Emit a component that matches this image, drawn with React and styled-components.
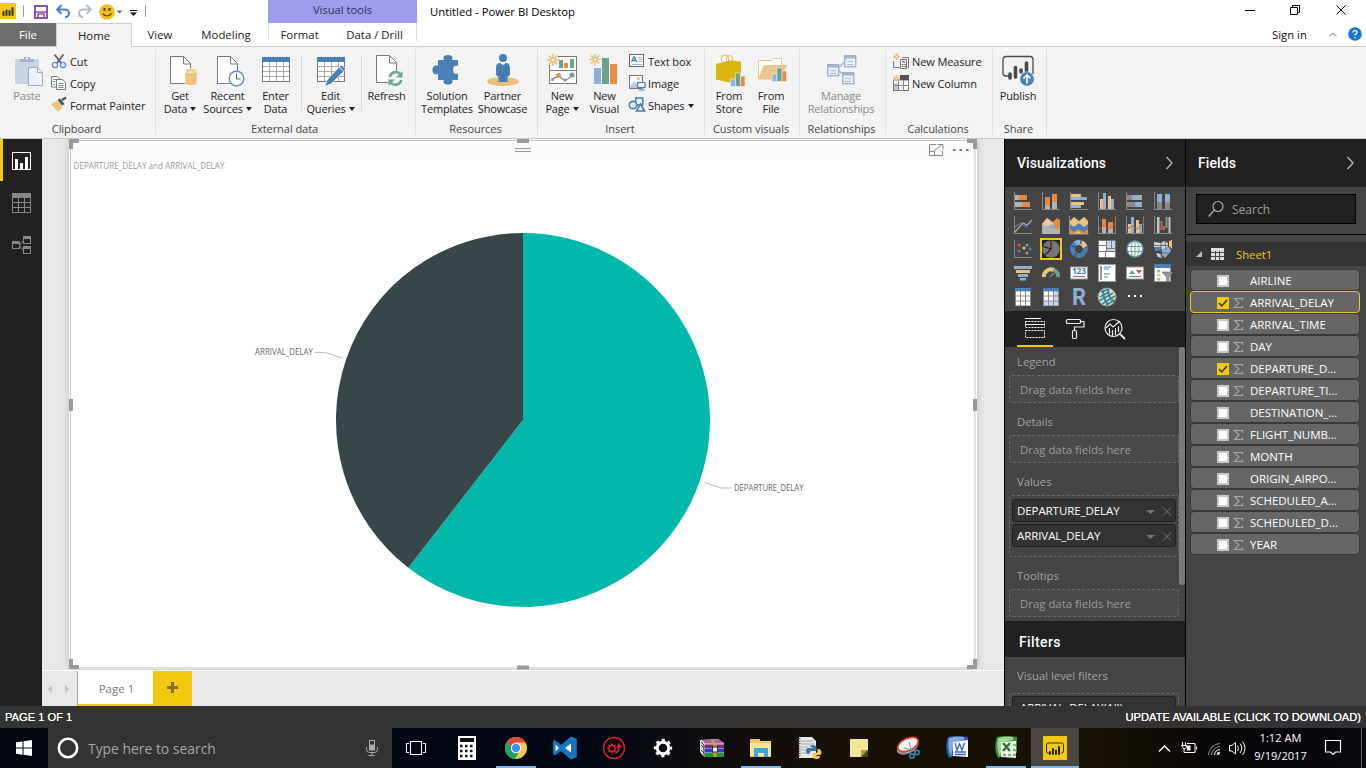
import React from "react";
import styled, { createGlobalStyle } from "styled-components";

const Global = createGlobalStyle`
  *{box-sizing:border-box}
  body{margin:0;overflow:hidden;background:#fff;font-family:"Open Sans","Noto Sans",sans-serif;font-size:11px;color:#222}
  svg{display:block;flex:none;overflow:visible}
`;

/* ---------- shell ---------- */
const Desktop = styled.div`width:1366px;height:768px;display:flex;flex-direction:column;overflow:hidden;`;
const Caret = styled.span`display:inline-block;width:0;height:0;border:3px solid transparent;border-top:4px solid ${p => p.$c || "#222"};border-bottom:0;margin-left:${p => p.$ml ?? 3}px;vertical-align:2px;`;

/* ---------- title bar ---------- */
const TitleBar = styled.header`height:23px;display:flex;background:#fff;`;
const QuickAccess = styled.div`width:268px;height:23px;`;
const VisualTools = styled.div`width:149px;background:#9d9cef;text-align:center;line-height:20px;font-size:11.2px;color:#33335a;`;
const WindowTitle = styled.div`padding-left:13px;line-height:24px;font-size:11.3px;color:#000;flex:1;`;
const WindowButtons = styled.div`width:126px;height:23px;`;

const TabRow = styled.nav`height:24px;display:flex;border-bottom:1px solid #cdcdcd;font-size:11.4px;line-height:24px;`;
const Tab = styled.div`
  width:${p => p.$w}px;height:24px;text-align:center;color:#222;padding:0 ${p => p.$pr || 0}px 0 ${p => p.$pl || 0}px;
  ${p => p.$file && "background:#6d6d6d;color:#fff;height:23px;"}
  ${p => p.$on && "background:#f3f3f3;border:1px solid #cdcdcd;border-bottom:0;line-height:23px;"}
`;
const ToolTabs = styled.div`width:149px;height:18px;display:flex;border-left:1px solid #ddd;border-right:1px solid #ddd;`;
const TabSpacer = styled.div`flex:1;`;
const SignIn = styled.div`width:94px;display:flex;font-size:11.3px;color:#111;`;

/* ---------- ribbon ---------- */
const Ribbon = styled.section`height:92px;display:flex;background:#f3f3f3;border-bottom:1px solid #c8c8c8;`;
const Group = styled.div`width:${p => p.$w}px;margin:2px 0 3px;border-right:1px solid #dfdfdf;display:flex;flex-direction:column;`;
const GroupBody = styled.div`height:71px;flex:none;display:flex;padding-left:${p => p.$pl || 0}px;`;
const GroupLabel = styled.div`flex:none;text-align:center;line-height:17px;letter-spacing:-.05px;color:#444;padding-right:2px;`;
const BigButton = styled.div`
  width:${p => p.$w}px;padding-top:4px;display:flex;flex-direction:column;align-items:center;text-align:center;
  line-height:13px;white-space:nowrap;color:${p => (p.$off ? "#888" : "#222")};letter-spacing:-.16px;
`;
const BigIcon = styled.div`height:36px;`;
const Rule = styled.div`width:1px;height:55px;margin:7px ${p => p.$r}px 0 ${p => p.$l}px;background:#dadada;`;
const SmallList = styled.div`display:flex;flex-direction:column;padding:1px 0 0 ${p => p.$l ?? 2}px;`;
const SmallButton = styled.div`height:22px;display:flex;align-items:center;gap:3px;white-space:nowrap;letter-spacing:-.1px;`;

/* ---------- workspace ---------- */
const Workspace = styled.main`height:567px;display:flex;`;
const ViewRail = styled.aside`width:42px;background:#212121;display:flex;flex-direction:column;`;
const RailItem = styled.div`height:42px;display:flex;align-items:center;padding:${p => (p.$on ? "0 0 0 9px" : "2px 0 0 12px")};${p => p.$on && "border-left:3px solid #f2c811;"}`;
const ReportArea = styled.div`width:962px;display:flex;flex-direction:column;background:#e9e9e9;`;
const CanvasWrap = styled.div`height:532px;padding:0 27px 0 27px;border-bottom:1px solid #fff;overflow:hidden;`;
const Canvas = styled.div`width:908px;height:530px;background:#fff;box-shadow:0 0 9px rgba(0,0,0,.18);`;
const PageBar = styled.div`height:35px;display:flex;`;
const PageArrows = styled.div`width:36px;border-right:1px solid #a8a8a8;`;
const PageTab = styled.div`width:75px;background:#fff;border-bottom:2px solid #f2c811;text-align:center;line-height:35px;padding-left:2px;font-size:11.5px;color:#777;`;
const AddPage = styled.div`width:39px;background:#f2c811;display:flex;align-items:center;justify-content:center;padding-bottom:1px;`;

const Pane = styled.aside`width:181px;background:#444;border-left:1px solid #000;display:flex;flex-direction:column;overflow:hidden;& > *{flex:none;}`;
const PaneHead = styled.div`height:48px;background:#212121;color:#fff;display:flex;align-items:center;justify-content:space-between;padding:0 12px 0 12px;font:500 14px Roboto,sans-serif;letter-spacing:.08px;`;
const Gallery = styled.div`height:124px;padding:2px 0 0 4px;display:grid;grid-template-columns:repeat(6,28px);grid-auto-rows:24px;`;
const GalleryCell = styled.div`
  display:flex;align-items:center;justify-content:center;
  ${p => p.$on && "border:1px solid #f2c811;outline:1px solid #f2c811;outline-offset:-2px;background:#222;width:22px;height:22px;margin:1px 3px;"}
`;
const WellTabs = styled.div`height:36px;background:#212121;display:flex;padding-left:12px;`;
const WellTab = styled.div`width:36px;margin-right:4px;display:flex;align-items:center;justify-content:center;padding-top:1px;border-bottom:2px solid ${p => (p.$on ? "#f2c811" : "transparent")};`;
const Wells = styled.div`height:274px;display:flex;overflow:hidden;`;
const WellList = styled.div`width:174px;`;
const ScrollThumb = styled.div`width:6px;height:238px;background:#7a7a7a;border-radius:3px;`;
const WellTitle = styled.div`height:${p => p.$h || 28}px;padding:${p => p.$pt ?? 1}px 0 0 12px;line-height:28px;font-size:11.3px;color:#a3a3a3;`;
const DropZone = styled.div`
  width:170px;height:28px;margin-left:4px;border:1px dashed #686868;border-radius:3px;background:#494949;
  padding-left:10px;line-height:27px;font-size:11.4px;color:#9b9b9b;
`;
const ValueZone = styled(DropZone)`height:62px;padding:3px 2px;display:flex;flex-direction:column;gap:2px;background:#444;`;
const Chip = styled.div`
  height:23px;flex:none;background:#333;border:1px solid #202020;border-radius:3px;color:#fff;font-size:11.5px;letter-spacing:-.08px;
  display:flex;align-items:center;padding:0 3px 0 4px;
`;
const ChipName = styled.span`flex:1;line-height:20px;padding-left:${p => p.$l || 0}px;`;
const FiltersHead = styled.div`height:36px;background:#212121;color:#fff;padding:3px 0 0 14px;font:500 14px/36px Roboto,sans-serif;letter-spacing:.4px;`;
const FilterZone = styled(ValueZone)`height:62px;padding-top:2px;`;

const SearchArea = styled.div`height:48px;padding:7px 9px 0 10px;border-bottom:1px solid #000;`;
const SearchBox = styled.div`width:160px;height:30px;background:#212121;border:1px solid #000;display:flex;align-items:center;gap:8px;padding-left:11px;color:#9e9e9e;font-size:12px;`;
const TableRow = styled.div`height:24px;margin:7px 0 3px;background:#333;display:flex;align-items:center;padding-left:10px;color:#f2c811;font-size:11.3px;`;
const TableName = styled.span`margin-left:12px;`;
const FieldRow = styled.div`
  width:170px;height:22px;margin-left:4px;display:flex;align-items:center;padding-left:26px;border-radius:4px;color:#fff;
  background:#666;border:1px solid ${p => (p.$hot ? "#f2c811" : "#393939")};font-size:11.5px;letter-spacing:-.03px;
`;
const CheckBox = styled.span`width:12px;height:12px;margin-top:1px;background:${p => (p.$on ? "#f2c811" : "#fff")};border:2px solid ${p => (p.$on ? "#f2c811" : "#c8c8c8")};display:flex;align-items:center;justify-content:center;`;
const Sigma = styled.span`width:21px;padding:1px 0 0 5px;`;

/* ---------- status + taskbar ---------- */
const StatusBar = styled.footer`height:22px;background:#333;color:#fff;display:flex;justify-content:space-between;padding:0 5px;font:11.15px/22px "Liberation Sans",sans-serif;text-shadow:0 0 .4px #fff;`;
const Taskbar = styled.div`height:40px;display:flex;background:linear-gradient(90deg,#020711 0,#030815 44%,#0b0c11 48%,#100d0c 54%,#171006 62%,#181305 80%,#0a0707 88%,#060509 93%,#080a10);`;
const StartButton = styled.div`width:48px;display:flex;align-items:center;justify-content:center;`;
const TaskSearch = styled.div`width:344px;background:#333;display:flex;align-items:center;padding-left:9px;color:#a6a6a6;font-size:13.9px;`;
const SearchHint = styled.span`margin-left:9px;width:278px;`;
const AppButton = styled.div`
  width:${p => (p.$w || 40)}px;margin-left:${p => (p.$ml ?? 9)}px;display:flex;align-items:center;justify-content:center;
  border-bottom:2px solid ${p => (p.$open ? "#76b9ed" : "transparent")};border-top:2px solid transparent;
  ${p => p.$active && "background:#4a4741;background-clip:padding-box;border-top-color:#4a4741;"}
`;
const Tray = styled.div`width:91px;margin-left:76px;`;
const Clock = styled.div`width:68px;color:#fff;text-align:center;font-size:11.1px;line-height:18px;padding:1px 0 0 1px;`;
const ActionCentre = styled.div`width:48px;padding-right:9px;border-right:1px solid #666;display:flex;align-items:center;justify-content:center;`;

/* Drawing surface whose viewBox is x, y, width, height at 1:1 scale. */
const Art = ({ b, children, ...r }) => {
  const [, , w, h] = b;
  return <svg width={w} height={h} viewBox={b.join(" ")} fill="none" {...r}>{children}</svg>;
};
const R = ({ x, y, w, h, f, ...r }) => <rect x={x} y={y} width={w} height={h} fill={f} {...r} />;

/* ---------- ribbon icons ---------- */
const Sheet = ({ x, y }) => (
  <>
    <path d={`M${x + 4.5} ${y + 0.5}h13l7 7v20h-20z`} fill="#fff" stroke="#777" />
    <path d={`M${x + 17.5} ${y + 0.5}v7.5h7`} stroke="#777" />
  </>
);
const Table = ({ x, y }) => (
  <>
    <R x={x + 0.5} y={y + 0.5} w={27} h={24} f="#fff" stroke="#777" />
    <R x={x} y={y} w={28} h={5} f="#4a80b8" />
    <path d={`M${x + 7.5} ${y + 5}v19M${x + 14.5} ${y + 5}v19M${x + 21.5} ${y + 5}v19M${x + 1} ${y + 9.5}h26M${x + 1} ${y + 14.5}h26M${x + 1} ${y + 19.5}h26`} stroke="#aaa" />
  </>
);
const Spark = ({ x, y, r = 5.5 }) => (
  <g stroke="#e9bd78" strokeWidth={r > 4 ? 1.5 : 1.1}>
    <path d={[0, 45, 90, 135, 180, 225, 270, 315].map(a => {
      const c = Math.cos(a * Math.PI / 180), s = Math.sin(a * Math.PI / 180);
      return `M${x + c * r * 0.45} ${y + s * r * 0.45}L${x + c * r} ${y + s * r}`;
    }).join("")} />
    <circle cx={x} cy={y} r={r * 0.35} />
  </g>
);
const Bars = ({ x, y }) => (
  <g stroke="#f3f3f3" strokeWidth=".6">
    <R x={x} y={y + 6} w={5} h={7.5} f="#8fb3d9" /><R x={x + 5} y={y} w={5} h={13.5} f="#6ba28f" /><R x={x + 10} y={y + 3} w={4.5} h={10.5} f="#e58d45" />
  </g>
);
const big = {
  paste: <><R x={15} y={59} w={24} h={25} f="#c9d3e6" /><path d="M20 62v-3h4v-2h6v2h4v3z" fill="#a3b1cf" /><R x={26} y={57.5} w={2} h={2} f="#fff" /><path d="M28.500 67.500h9l5 5v13h-14z" fill="#edf3fc" stroke="#9aabc9" /><path d="M37.500 67.500v5h5" stroke="#9aabc9" /></>,
  getData: <><Sheet x={166} y={56} /><path d="M185 70v13c0 3 12 3 12 0V70z" fill="#ecc479" stroke="#f3f3f3" strokeWidth=".6" /><ellipse cx="191" cy="70.500" rx="6" ry="2.300" fill="#f2d294" stroke="#fff" strokeWidth=".6" /></>,
  recent: <><Sheet x={213} y={56} /><circle cx="236.500" cy="78.500" r="7.300" fill="#fff" stroke="#5d8fc2" strokeWidth="1.400" /><path d="M236.500 73.500v5.500h4" stroke="#555" /></>,
  enter: <Table x={262} y={57} />,
  edit: <><Table x={317} y={57} /><path d="M325 86l2-6 14-15 5 4-15 15z" fill="#4a80b8" stroke="#f3f3f3" strokeWidth=".8" /><path d="M339 67l4.500 4" stroke="#fff" /></>,
  refresh: <><Sheet x={372} y={55} /><circle cx="395.500" cy="78.500" r="8" fill="#f3f3f3" /><path d="M389.800 77a6 6 0 0 1 10-3.200M401.200 80a6 6 0 0 1-10 3.200" stroke="#6fa692" strokeWidth="2.500" /><path d="M402.500 71v6.500h-6.500zM388.500 86v-6.500h6.500z" fill="#6fa692" /></>,
  solution: <path d="M438 60h6c-1-2-1-5 4-5s5 3 4 5h6v6c-3-1-5 0-5 3.800s2 4.700 5 3.700V80h-6c1 2 1 4.500-4 4.500s-5-2.500-4-4.500h-6v-6c-2 1-5.500.5-5.500-4s3.500-5 5.500-4z" fill="#4a80b8" />,
  partner: <><ellipse cx="503" cy="81.500" rx="16" ry="4.500" fill="#ecc07a" /><circle cx="503" cy="58" r="4" fill="#4a80b8" /><path d="M496 68q0-5 4-5l3 2 3-2q4 0 4 5v7l-2.500 2v5h-9v-5l-2.500-2z" fill="#4a80b8" /><path d="M503 72v9M500 67v8M506 67v8" stroke="#355f91" strokeWidth=".6" /></>,
  newPage: <><R x={549.5} y={56.5} w={27} h={27} f="#fff" stroke="#777" /><path d="M549 70.500h28" stroke="#777" /><R x={559} y={60} w={4} h={8} f="#6ba28f" /><R x={564} y={63} w={4} h={5} f="#e58d45" /><R x={570} y={59} w={4} h={9} f="#6ba28f" /><path d="M552 79l7-3 6 5 8-6" stroke="#555" /><circle cx="558.500" cy="75.500" r="2.500" fill="#e58d45" /><circle cx="572" cy="75" r="2.600" fill="#6ba28f" /><circle cx="565" cy="80" r="1.500" fill="#6ba28f" /><circle cx="552.500" cy="79.500" r="1.500" fill="#6ba28f" /><circle cx="553" cy="60" r="6" fill="#f3f3f3" /><Spark x={553} y={60} r={6.3} /></>,
  newVisual: <><R x={594} y={68} w={7} h={16} f="#8fafd6" /><R x={602} y={58} w={7} h={26} f="#6ba28f" /><R x={610} y={64} w={7} h={20} f="#e58d45" /><Spark x={595} y={59.5} r={5.7} /></>,
  store: <><path d="M721.500 61v-2.500a3.500 3.500 0 0 1 7 0V61M726.500 60v-1.500a3 3 0 0 1 6 0V61" stroke="#dfbd39" /><path d="M716 64l13-3.500 12 1v18l-12 3-13-3z" fill="#dcb50f" /><Bars x={730.5} y={73} /></>,
  file: <><path d="M758.500 79V60.500h13l2-2h8v20.500z" fill="#fff" stroke="#ecc58a" /><path d="M758 79l6-14h23l-6 14z" fill="#ecc58a" /><Bars x={772} y={68} /></>,
  manage: <><path d="M838 68l8-7M838 70l6 5" stroke="#b5bfd2" strokeWidth="1.800" />{[[827, 64], [844, 55], [842, 72]].map(([x, y]) => <g key={x}><R x={x + 0.7} y={y + 0.7} w={11} h={11} f="#e8f0fa" stroke="#a3b1cb" strokeWidth="1.400" /><R x={x} y={y} w={12} h={3.5} f="#a3b1cb" /><path d={`M${x + 3} ${y + 6.500}h6M${x + 3} ${y + 9.500}h6`} stroke="#b0bdd5" /></g>)}</>,
  publish: <><path d="M1009 76h-3.500q-2.500 0-2.500-3V60q0-3.500 3-3.500h24q3 0 3 3.500v14" stroke="#4a4a4a" strokeWidth="1.300" /><path d="M1010 78v-4M1015.500 77V67.500M1021 72v-2M1026.500 72v-9" stroke="#4a4a4a" strokeWidth="3.600" strokeLinecap="round" /><circle cx="1027" cy="79" r="7.200" fill="#4a80b8" stroke="#f3f3f3" strokeWidth=".6" /><path d="M1027 83.500v-8M1023.500 78.500l3.500-3.700 3.500 3.700" stroke="#fff" strokeWidth="1.600" /></>,
};
const small = {
  cut: <Art b={[51, 54, 16, 16]}><path d="M54.500 55.500l7 9M63.500 55.500l-7 9" stroke="#666" strokeWidth="2" /><circle cx="55" cy="66" r="2.600" stroke="#5d8fc2" strokeWidth="1.300" /><circle cx="63" cy="66" r="2.600" stroke="#5d8fc2" strokeWidth="1.300" /></Art>,
  copy: <Art b={[51, 76, 16, 16]}><path d="M51.500 77.500h6l2.500 2.500v8h-8.500z" fill="#fff" stroke="#777" /><path d="M56.500 80.500h6l3 3v7h-9z" fill="#fff" stroke="#777" /><path d="M53 80.500h3M53 82.500h2M53 85.500h2M58.500 84.500h5M58.500 86.500h5M58.500 88.500h5" stroke="#5d8fc2" /></Art>,
  painter: <Art b={[51, 98, 16, 16]}><path d="M51 105l6-3 6 6-5 5z" fill="#ecc479" /><path d="M57 101l3-2 5 6-3 2z" fill="#555" stroke="#f3f3f3" strokeWidth=".6" /><path d="M62 101l4-2.500" stroke="#555" strokeWidth="2.500" /></Art>,
  textBox: <Art b={[629, 54, 16, 16]}><R x={629.5} y={55.5} w={14} h={12} f="#fff" stroke="#666" /><path d="M631.500 63l2.300-5h.6l2.400 5M632.500 61.500h3.500" stroke="#4a80b8" strokeWidth="1.300" /><path d="M638.500 58.500h4M638.500 60.500h4M638.500 62.500h4M632 65.500h10" stroke="#999" strokeWidth=".8" /></Art>,
  image: <Art b={[629, 76, 16, 16]}><R x={629.5} y={76.5} w={13} h={13} f="#fff" stroke="#777" /><path d="M630 88l4-6 4 4v3h-8z" fill="#b9cce6" /><circle cx="638.500" cy="79.500" r="1.600" fill="#ecc07a" /><R x={637.5} y={83.5} w={7.5} h={5} f="#fff" stroke="#4a80b8" strokeWidth="1.200" /><path d="M638.500 91h6" stroke="#4a80b8" /></Art>,
  shapes: <Art b={[629, 98, 16, 16]}><R x={635.7} y={99} w={7} h={7} stroke="#4a80b8" strokeWidth="1.600" /><circle cx="633" cy="106" r="3.700" fill="#f3f3f3" stroke="#4a80b8" strokeWidth="1.700" /><path d="M640.500 105l4 7h-8z" fill="#f3f3f3" stroke="#4a80b8" strokeWidth="1.600" /></Art>,
  measure: <Art b={[893, 54, 16, 16]}><path d="M893.500 62v6.500h6M902 58.500h6.500v10h-1" stroke="#777" /><R x={900.500} y={60.500} w={6} h={9} f="#fff" stroke="#777" /><R x={902} y={62} w={3} h={1.500} f="#777" /><path d="M902 65.500h4M902 67.500h4" stroke="#555" strokeDasharray="1 .500" /><Spark x={896.500} y={57.500} r={3.500} /></Art>,
  column: <Art b={[893, 76, 16, 16]}><R x={893.5} y={81} w={15} h={10.500} f="#fff" stroke="#777" /><R x={900} y={76} w={9} h={5} f="#555" /><R x={894} y={84} w={4} h={7} f="#b9cce6" /><path d="M898.500 81v10M903.500 81v10M894 86.500h15" stroke="#888" /><Spark x={896.500} y={79.500} r={3.500} /></Art>,
};

const Big = ({ icon, x, w, off, lines, caret }) => (
  <BigButton $w={w} $off={off}>
    <BigIcon><Art b={[x, 53, w, 36]}>{big[icon]}</Art></BigIcon>
    {lines.map((l, i) => <div key={l}>{l}{caret && i === lines.length - 1 && <Caret />}</div>)}
  </BigButton>
);
const Small = ({ icon, label, caret }) => <SmallButton>{small[icon]}<span>{label}{caret && <Caret $ml={4} />}</span></SmallButton>;

/* ---------- gallery icons, each on a 20x20 surface centred on 10,10 ---------- */
const O = "#e58a3e", S = "#8fafd6", Y = "#ebc37e", GR = "#b3b3b3", DB = "#4a80b8", GN = "#6ba28f";
const Axis = () => <path d="M1.500 1v17.500M1 18.500h18" stroke="#888" />;
const gallery = [
  <><Axis /><R x={2} y={4} w={4} h={5} f={GR} /><R x={6} y={4} w={8} h={5} f={O} /><R x={2} y={11} w={7} h={5} f={GR} /><R x={9} y={11} w={8} h={5} f={O} /></>,
  <><Axis /><R x={4} y={6} w={5} h={9} f={O} /><R x={4} y={15} w={5} h={3} f={GR} /><R x={11} y={3} w={5} h={8} f={O} /><R x={11} y={11} w={5} h={7} f={GR} /></>,
  <><Axis /><R x={2} y={3} w={10} h={3} f={Y} /><R x={2} y={6} w={16} h={3} f={S} /><R x={2} y={11} w={13} h={3} f={Y} /><R x={2} y={14} w={10} h={3} f={S} /></>,
  <><Axis /><R x={3} y={8} w={3} h={10} f={Y} /><R x={6} y={2} w={3} h={16} f={S} /><R x={11} y={5} w={3} h={13} f={Y} /><R x={14} y={8} w={3} h={10} f={S} /></>,
  <><Axis /><R x={2} y={4} w={5} h={5} f="#888" /><R x={7} y={4} w={10} h={5} f={S} /><R x={2} y={11} w={8} h={5} f="#888" /><R x={10} y={11} w={7} h={5} f={S} /></>,
  <><Axis /><R x={4} y={3} w={5} h={8} f={S} /><R x={4} y={11} w={5} h={7} f="#888" /><R x={12} y={3} w={5} h={8} f={S} /><R x={12} y={11} w={5} h={7} f="#888" /></>,
  <><Axis /><path d="M2 17l8-9 4 2 5-5" stroke="#e3a294" strokeWidth="1.200" /><path d="M2 12l6-4 5 4 6-6" stroke={DB} strokeWidth="1.200" /></>,
  <><path d="M1 9l5-6 6 4 4-4 3 2v9H1z" fill={O} /><path d="M1 9l5-6 7 6v3H1z" fill="#ecc9a5" /><path d="M1 9l5 2 4 2 9 1v5H1z" fill={GR} /><path d="M6 11l6-2 4 5z" fill={S} /></>,
  <><path d="M1 6l4-4 5 4 5-4 4 4v8H1z" fill={Y} /><path d="M1 9l4 3 5-4 5 4 4-3v8H1z" fill={DB} /><path d="M1 14l4 3 4-3 5 3 5-3v5H1z" fill={O} /><path d="M4 19l5-3 5 3z" fill={Y} /><path d="M.500 1v18h19" stroke="#999" /></>,
  <><Axis /><R x={5} y={4} w={4} h={14} f={O} /><R x={11} y={7} w={5} h={11} f={O} /><R x={5} y={11} w={4} h={7} f={GR} /><R x={11} y={13} w={5} h={5} f={GR} /><path d="M2 14l5-3 5 3 6-5" stroke="#cf5a45" /><path d="M18.500 1v17" stroke="#a0735b" /></>,
  <><Axis /><R x={3} y={9} w={3} h={9} f={Y} /><R x={6} y={2} w={3} h={16} f={S} /><R x={11} y={5} w={3} h={13} f={Y} /><R x={14} y={9} w={3} h={9} f={S} /><path d="M2 14l5-3 5 3 6-5" stroke="#cf5a45" /><path d="M18.500 1v17" stroke="#a0735b" /></>,
  <><Axis /><R x={4} y={2} w={2.500} h={16} f="#c4c4c4" /><R x={7.500} y={6} w={2} h={9} f="#cf5a45" /><R x={9.500} y={11} w={2.500} h={4} f="#cf5a45" /><R x={12.500} y={2} w={2} h={11} f={GN} /><R x={15.500} y={2} w={2} h={16} f="#c4c4c4" /></>,
  <><Axis />{[[6, 6, "#cf5a45"], [14, 6, GN], [11, 9, Y], [17, 10, DB], [6, 12, DB], [14, 14, "#999"]].map(([x, y, f]) => <circle key={x + f} cx={x} cy={y} r="1.600" fill={f} />)}</>,
  <><circle cx="10" cy="10" r="8.800" fill="#757575" /><path d="M10 10V0M10 10L1 7M10 10l-7 7" stroke="#222" strokeWidth="1.200" /></>,
  <g strokeWidth="5"><circle cx="10" cy="10" r="6.500" stroke={DB} /><path d="M6.500 4.500a6.500 6.500 0 0 1 5-1" stroke={S} /><path d="M12 3.800a6.500 6.500 0 0 1 4.300 4.700" stroke={Y} /><path d="M12 1v4M16 8.500l3-1M3 7l3 1M6 18l1-4M15 14l2 2" stroke="#444" strokeWidth="1" /></g>,
  <><R x={1} y={1} w={18} h={18} f="#777" /><R x={2} y={2} w={7} h={4} f="#fff" /><R x={2} y={7} w={7} h={5} f="#fff" /><R x={10} y={2} w={4} h={7} f="#c5d3ea" /><R x={15} y={2} w={3} h={7} f="#c5d3ea" /><R x={10} y={10} w={8} h={2} f="#c5d3ea" /><R x={2} y={13} w={6} h={5} f="#fff" /><R x={9} y={13} w={9} h={5} f="#fff" /></>,
  <g stroke="#5d8fc2"><circle cx="10" cy="10" r="8" fill="#fff" strokeWidth="1.300" /><ellipse cx="10" cy="10" rx="4" ry="8" stroke={GN} /><path d="M10 2v16M2 7.500h16M2 12.500h16" stroke={GN} /></g>,
  <><path d="M1 3l7 1 3-2 4 2v4l-5 3-9-3z" fill="#d5d5d5" /><path d="M1 8h7v4H2z" fill={DB} /><path d="M9 10l7-2 2 4-6 7-3-3z" fill={S} /><path d="M16 2l3-1v9l-3-3z" fill={Y} /><path d="M3 14l5 1 1 4-4-1z" fill="#d5d5d5" /><path d="M1 6.500h14M8 4v14M12 3l1 8M9 14h7" stroke="#555" strokeWidth=".8" /></>,
  <><R x={1} y={3} w={18} h={3} f={S} /><R x={3} y={7} w={14} h={3} f={Y} /><R x={5} y={11} w={10} h={3} f={S} /><R x={7} y={15} w={6} h={2.5} f={S} /></>,
  <g strokeWidth="4"><path d="M3 14a7 7 0 0 1 10-7" stroke={Y} /><path d="M13 7a7 7 0 0 1 4 7" stroke={GN} /><path d="M9 14l4-4" stroke="#888" strokeWidth="1.500" /></g>,
  <><R x={1.500} y={4} w={17} h={12} f="#fff" stroke="#999" /><text x="3" y="11.200" fontSize="8.500" fontWeight="700" fill="#4a80b8" fontFamily="Open Sans" textLength="14">123</text><path d="M4 13.500h12" stroke="#777" /></>,
  <><R x={1.500} y={1.500} w={17} h={17} f="#fff" stroke="#999" /><R x={3} y={3} w={2} h={14} f="#999" /><path d="M7 4h7M7 6h5M7 11h6M7 14h4" stroke={S} strokeWidth="1.300" /></>,
  <><R x={1.500} y={4} w={17} h={12} f="#fff" stroke="#999" /><path d="M4 11l3-4 3 4z" fill={GN} /><path d="M11 7h6l-3 4z" fill="#cf5a45" /><path d="M4 13.500h12" stroke="#777" /></>,
  <><R x={1.500} y={1.500} w={16} h={17} f="#fff" stroke="#999" /><R x={1} y={1} w={17} h={4} f={DB} /><R x={4} y={7} w={3} h={2.5} f={S} /><R x={4} y={11} w={3} h={2.500} f={Y} /><R x={4} y={15} w={3} h={2.500} f="#e3a294" /><path d="M9 9h11l-4 5v5h-2.500v-5z" fill="#999" stroke="#555" strokeWidth=".5" /></>,
  <><R x={2} y={1} w={16} h={18} f="#888" /><R x={2} y={1} w={16} h={3} f={DB} />{[0, 1, 2].map(i => [0, 1, 2].map(j => <R key={i + "-" + j} x={3 + i * 5} y={4.500 + j * 5} w={4} h={4} f="#fff" />))}</>,
  <><R x={2} y={1} w={16} h={18} f="#888" /><R x={2} y={1} w={16} h={3} f={DB} />{[0, 1, 2].map(i => [0, 1, 2].map(j => <R key={i + "-" + j} x={3 + i * 5} y={4.500 + j * 5} w={4} h={4} f={i === 2 || j === 2 ? "#c5d8ef" : "#fff"} />))}</>,
  <text x="3" y="18" fontSize="23" fontWeight="700" fill="#8fafd6" fontFamily="Roboto" textLength="14" lengthAdjust="spacingAndGlyphs">R</text>,
  <><circle cx="10" cy="10" r="9" fill="#d8e0da" stroke="#999" /><path d="M4 5l8-3M3 10l9-5M2 14l14-8M5 17l13-8M9 18l9-5" stroke="#3d8f5e" strokeWidth="1.600" /><path d="M6 3q0 8 5 15M11 2q0 8 6 13" stroke="#3c7dbb" strokeWidth="2" /></>,
  <><R x={3} y={8} w={2} h={2} f="#fff" /><R x={9} y={8} w={2} h={2} f="#fff" /><R x={15} y={8} w={2} h={2} f="#fff" /></>,
];

const fields = [
  ["AIRLINE", 0, 0], ["ARRIVAL_DELAY", 1, 1], ["ARRIVAL_TIME", 1, 0], ["DAY", 1, 0], ["DEPARTURE_D...", 1, 1], ["DEPARTURE_TI...", 1, 0],
  ["DESTINATION_...", 0, 0], ["FLIGHT_NUMB...", 1, 0], ["MONTH", 1, 0], ["ORIGIN_AIRPO...", 0, 0], ["SCHEDULED_A...", 1, 0], ["SCHEDULED_D...", 1, 0], ["YEAR", 1, 0],
];

const Chevron = () => <Art b={[0, 0, 7, 12]}><path d="M.500 0l5.500 6L.500 12" stroke="#bbb" strokeWidth="1.300" /></Art>;
const ChipTools = () => <Art b={[0, 0, 28, 10]}><path d="M2 4h9l-4.500 4z" fill="#777" /><path d="M19 1.500l8 8M27 1.500l-8 8" stroke="#777" /></Art>;

const PieVisual = () => (
  <Art b={[69, 139, 908, 530]} fontFamily="Open Sans">
    <R x={71} y={143} w={904} h={17} f="#fafafa" />
    <R x={70.5} y={140.5} w={904.5} h={527.500} stroke="#c3c3c3" />
    <g fill="#999">
      <path d="M69 139h10v4h-6v6h-4zM967 139h10v10h-4v-6h-6zM69 659h4v6h6v4H69zM973 659h4v10h-10v-4h6z" />
      <R x={517} y={139} w={12} h={4} /><R x={517} y={665.500} w={12} h={4} /><R x={69} y={399} w={4} h={12} /><R x={973} y={399} w={4} h={12} />
    </g>
    <path d="M515 148.500h16M515 151.500h16" stroke="#999" />
    <path d="M936 144.500h-6.500v11h13v-5M934 151l8-6.500M937.500 144.500h5.500v5M930 151.500h4.500v4" stroke="#888" />
    <path d="M953 150h2.500M959.500 150h2.500M966 150h2.500" stroke="#777" strokeWidth="2" />
    <text x="73.500" y="169" fontSize="9" fill="#999" textLength="151" lengthAdjust="spacingAndGlyphs">DEPARTURE_DELAY and ARRIVAL_DELAY</text>
    <path d="M523 420V233A187 187 0 1 1 408.300 567.700z" fill="#01b8aa" />
    <path d="M523 420L408.300 567.700A187 187 0 0 1 523 233z" fill="#374649" />
    <path d="M315 352.500h10.500l17 5.500M704.500 482.500l17 5.500h10" stroke="#bbb" />
    <g fontSize="8.200" fill="#666">
      <text x="255" y="355" textLength="58" lengthAdjust="spacingAndGlyphs">ARRIVAL_DELAY</text>
      <text x="734" y="491" textLength="69.500" lengthAdjust="spacingAndGlyphs">DEPARTURE_DELAY</text>
    </g>
  </Art>
);

/* ---------- taskbar icons ---------- */
const apps = [
  { w: 48, ml: 0, art: <Art b={[406, 738, 20, 20]}><R x={410.500} y={741.500} w={11} h={13} stroke="#fff" /><path d="M409 743.500h-2.500v9h2.500M423 743.500h2.500v9H423" stroke="#fff" /></Art> },
  { ml: 7, art: <Art b={[457, 736, 20, 24]}><R x={458} y={736} w={18} h={24} f="#fff" /><R x={460} y={738} w={14} h={4} f="#111" /><path d="M460 746h14M460 751h14M460 756h14" stroke="#111" strokeWidth="2.500" strokeDasharray="2.500 2.500" /></Art> },
  { open: 1, art: <Art b={[504, 736, 24, 24]}><circle cx="516" cy="748" r="11" fill="#f2c94c" /><path d="M516 748L506.500 742.500A11 11 0 0 1 525.500 742.500H516z" fill="#db4a3f" /><path d="M506.500 742.500A11 11 0 0 0 515 759l5-8.500-4-2.500z" fill="#1da462" /><circle cx="516" cy="748" r="5.200" fill="#fff" /><circle cx="516" cy="748" r="4.200" fill="#4a8af4" /></Art> },
  { art: <Art b={[553, 736, 24, 24]}><path d="M571 736.500l5.500 2.500v18l-5.500 2.500-16.500-15.500-1.500-3 1.500-1 16.500 13z" fill="#2b85c7" /><path d="M553 742l2-1.500 6 4.500 10-8.500 5.500 2.500v18l-5.500 2.500-10-8.500-6 4.500-2-1.500z" fill="#1276c1" /><path d="M555.500 744.500v7l3.500-3.500zM571 743.500v9l-6-4.500z" fill="#fff" /></Art> },
  { art: <Art b={[602, 736, 24, 24]}><circle cx="614" cy="748" r="10.500" stroke="#d9222a" strokeWidth="1.400" /><circle cx="612" cy="748.500" r="3" stroke="#d9222a" strokeWidth="1.600" /><path d="M612 743.500v2M612 751.500v2M607 748.500h2M608.500 745l1.300 1.300M608.500 752l1.300-1.300M615.500 752l-1.300-1.300M615.500 745l-1.300 1.300" stroke="#d9222a" strokeWidth="1.700" /><path d="M615.500 753q3.500-1.500 3.500-6" stroke="#d9222a" strokeWidth="1.800" /><path d="M616 747.500l3-4.500 3 4.500z" fill="#d9222a" /></Art> },
  { art: <Art b={[651, 736, 24, 24]}><circle cx="663" cy="748" r="5.800" stroke="#fff" strokeWidth="3" /><circle cx="663" cy="748" r="8" stroke="#fff" strokeWidth="2.400" strokeDasharray="3.200 3.083" strokeDashoffset="1.600" /></Art> },
  { art: <Art b={[700, 736, 24, 24]}><path d="M700 740l18-1 6 4v14H704l-4-5z" fill="#ddd" /><path d="M702 740l17-.500 5 4h-19z" fill="#b45bae" /><path d="M705 744.500h19v4h-19z" fill="#7b2b78" /><path d="M705 749h19v3.500h-19z" fill="#2840d8" /><path d="M705 753h19v4h-19z" fill="#1e9733" /><path d="M701 742l3 3v12M701 745l3 3M701 750l3 3" stroke="#333" /><path d="M712 740l3 5v12" stroke="#d2a136" strokeWidth="3" /><R x={712.5} y={747} w={5} h={5} f="#eee" stroke="#333" /></Art> },
  { open: 1, art: <Art b={[749, 736, 24, 24]}><path d="M750 739h10v2h11v16h-21z" fill="#f0c75c" /><path d="M750 743h21v13h-21z" fill="#fbe29a" /><path d="M754 757v-9h14v9h-4v-4h-6v4z" fill="#3ea6e0" /></Art> },
  { art: <Art b={[798, 736, 24, 24]}><path d="M799 737h13l4 4v17h-17z" fill="#e6e6e6" /><path d="M801 741h13M801 744h13M801 747h7M801 750h6M801 753h6" stroke="#aaa" /><path d="M799.500 738v19" stroke="#555" strokeDasharray="1 1.500" strokeWidth="2" /><path d="M810 747q0-2 3-2t3.500 2v4h-5q-2 0-2 3h-2q-1.500-1-1.500-3.500t2-2.500h4v-1z" fill="#3b77a8" /><path d="M817.500 749h2q2 1 2 3.500t-2 2.500h-3v1h3.500q0 3-3.500 3t-3.500-2.500V753h3q1.500-.500 1.500-2z" fill="#f5ca3f" /></Art> },
  { art: <Art b={[847, 736, 24, 24]}><path d="M850 739h18v11l-7 7h-11z" fill="#f3e596" /><path d="M861 757v-7h7z" fill="#b09d3f" /><path d="M868 750v7h-7z" fill="#51481a" /></Art> },
  { art: <Art b={[896, 736, 24, 24]}><ellipse cx="907.500" cy="747" rx="11.500" ry="6.500" transform="rotate(-25 907.500 747)" fill="#999" /><ellipse cx="908" cy="744.500" rx="11" ry="6" transform="rotate(-25 908 744.500)" fill="#f7f7f7" stroke="#d43f3a" strokeWidth="1.600" /><path d="M909 742l3 10M904 748l12 3" stroke="#888" /><circle cx="912" cy="756" r="2.300" stroke="#2b8ac9" strokeWidth="1.500" /><circle cx="917" cy="752.500" r="2.300" stroke="#2b8ac9" strokeWidth="1.500" /></Art> },
  { art: <Art b={[945, 736, 24, 24]}><path d="M948 737q8-2 20 0v16l-10 1-9 4q-5-9-1-21z" fill="#2d5ca8" /><path d="M949 738q7-2 15-1v3l-10 2-3 15q-4-9-2-19z" fill="#83a9dd" /><path d="M953 742l15-2v17l-15-1z" fill="#f7f9fc" /><path d="M955 743l2 7 2.500-6 2.500 6 2.500-7M955 752h11M955 754.500h11" stroke="#3a66b0" strokeWidth="1.300" /></Art> },
  { open: 1, art: <Art b={[994, 736, 24, 24]}><path d="M997 737q8-2 20 0v16l-10 1-9 4q-5-9-1-21z" fill="#3d9440" /><path d="M998 738q7-2 15-1v3l-10 2-3 15q-4-9-2-19z" fill="#a3d48e" /><path d="M1001 742l15-1v17l-15-1z" fill="#f4faf0" /><path d="M1003 743l7 8M1010 743l-7 8" stroke="#2a7b31" strokeWidth="2.500" /><path d="M1003 755h3M1008 755h3M1013 755h3M1013 750h3M1013 745h3" stroke="#7bb870" strokeWidth="2.500" /></Art> },
  { open: 1, active: 1, w: 48, ml: 5, art: <Art b={[1043, 736, 24, 24]}><R x={1043} y={736} w={24} h={24} f="#f2c811" /><path d="M1049 753h-1q-1.500 0-1.500-2v-6q0-2 2-2h13q2 0 2 2v6q0 2-1.500 2h-1" stroke="#3d3209" /><path d="M1050 754v-2M1053 754v-5M1056 754v-3.500M1059 754v-7" stroke="#2b2408" strokeWidth="2" strokeLinecap="round" /></Art> },
];

export default function App() {
  return (
    <Desktop>
      <Global />
      <TitleBar>
        <QuickAccess>
          <Art b={[0, 0, 268, 23]}>
            <R x={0} y={3} w={16} h={16} f="#f2c811" /><path d="M3.500 15v-3M6.500 15v-4.500M9.500 15v-4M12.500 15V8" stroke="#333" strokeWidth="2" strokeLinecap="round" />
            <path d="M23.500 5v12M145.500 5v12" stroke="#999" />
            <path d="M35 6h12v12H35z" stroke="#8a56b0" strokeWidth="2" /><path d="M35 12h12M38 18v-4h6v4" stroke="#8a56b0" strokeWidth="1.600" />
            <path d="M57.500 9.500h6.500q5 0 5 3.700 0 3-4 4.300M61.500 5l-4.300 4.500 4.300 4.300" stroke="#4a80b8" strokeWidth="2" />
            <path d="M90.500 9.500H84q-5 0-5 3.700 0 3 4 4.300M86.500 5l4.300 4.500-4.300 4.300" stroke="#b0bdd0" strokeWidth="2" />
            <circle cx="107" cy="12" r="7.800" fill="#f5bd17" /><R x={103.500} y={8} w={2} h={3} f="#5c4300" /><R x={108.500} y={8} w={2} h={3} f="#5c4300" /><path d="M102.500 13.500q4.500 5 9 0" stroke="#5c4300" strokeWidth="1.200" />
            <path d="M116.500 10.500h6l-3 3z" fill="#666" /><path d="M130 10.500h7" stroke="#111" /><path d="M130 12.500h7l-3.500 3.500z" fill="#111" />
          </Art>
        </QuickAccess>
        <VisualTools>Visual tools</VisualTools>
        <WindowTitle>Untitled - Power BI Desktop</WindowTitle>
        <WindowButtons>
          <Art b={[1240, 0, 126, 23]} stroke="#000"><path d="M1245 10.500h10M1336.500 5.500l9 9M1345.500 5.500l-9 9" /><path d="M1290.500 7.500h7v7h-7zM1292.500 7.500v-2h7v7h-2" /></Art>
        </WindowButtons>
      </TitleBar>
      <TabRow>
        <Tab $w={56} $file>File</Tab>
        <Tab $w={76} $on>Home</Tab>
        <Tab $w={56}>View</Tab>
        <Tab $w={80} $pr={4}>Modeling</Tab>
        <ToolTabs><Tab $w={62}>Format</Tab><Tab $w={87} $pl={3}>Data / Drill</Tab></ToolTabs>
        <TabSpacer />
        <SignIn>
          Sign in
          <Art b={[1307, 23, 58, 23]}><path d="M1329 36.500l3.700-3.500 3.800 3.500" stroke="#aaa" strokeWidth="1.200" /><circle cx="1355" cy="34" r="6.800" fill="#1877cf" /><path d="M1353 32.600q0-1.900 2-1.900t2 1.700q0 1-2 2.400v.800M1355 37v1.200" stroke="#fff" strokeWidth="1.300" /></Art>
        </SignIn>
      </TabRow>

      <Ribbon>
        <Group $w={156}>
          <GroupBody $pl={5}>
            <Big icon="paste" x={5} w={44} off lines={["Paste"]} />
            <SmallList><Small icon="cut" label="Cut" /><Small icon="copy" label="Copy" /><Small icon="painter" label="Format Painter" /></SmallList>
          </GroupBody>
          <GroupLabel>Clipboard</GroupLabel>
        </Group>
        <Group $w={260}>
          <GroupBody $pl={2}>
            <Big icon="getData" x={158} w={44} lines={["Get", "Data"]} caret />
            <Big icon="recent" x={202} w={51} lines={["Recent", "Sources"]} caret />
            <Big icon="enter" x={253} w={45} lines={["Enter", "Data"]} />
            <Rule $l={3} $r={0} />
            <Big icon="edit" x={302} w={57} lines={["Edit", "Queries"]} caret />
            <Rule $l={2} $r={0} />
            <Big icon="refresh" x={362} w={49} lines={["Refresh"]} />
          </GroupBody>
          <GroupLabel>External data</GroupLabel>
        </Group>
        <Group $w={122}>
          <GroupBody $pl={4}>
            <Big icon="solution" x={420} w={54} lines={["Solution", "Templates"]} />
            <Big icon="partner" x={474} w={57} lines={["Partner", "Showcase"]} />
          </GroupBody>
          <GroupLabel>Resources</GroupLabel>
        </Group>
        <Group $w={167}>
          <GroupBody $pl={3}>
            <Big icon="newPage" x={541} w={42} lines={["New", "Page"]} caret />
            <Big icon="newVisual" x={583} w={43} lines={["New", "Visual"]} />
            <SmallList $l={3}><Small icon="textBox" label="Text box" /><Small icon="image" label="Image" /><Small icon="shapes" label="Shapes" caret /></SmallList>
          </GroupBody>
          <GroupLabel>Insert</GroupLabel>
        </Group>
        <Group $w={95}>
          <GroupBody $pl={3}>
            <Big icon="store" x={708} w={42} lines={["From", "Store"]} />
            <Big icon="file" x={750} w={42} lines={["From", "File"]} />
          </GroupBody>
          <GroupLabel>Custom visuals</GroupLabel>
        </Group>
        <Group $w={86}>
          <GroupBody $pl={1}><Big icon="manage" x={801} w={80} off lines={["Manage", "Relationships"]} /></GroupBody>
          <GroupLabel>Relationships</GroupLabel>
        </Group>
        <Group $w={107}>
          <GroupBody $pl={5}><SmallList><Small icon="measure" label="New Measure" /><Small icon="column" label="New Column" /></SmallList></GroupBody>
          <GroupLabel>Calculations</GroupLabel>
        </Group>
        <Group $w={54}>
          <GroupBody $pl={3}><Big icon="publish" x={996} w={44} lines={["Publish"]} /></GroupBody>
          <GroupLabel>Share</GroupLabel>
        </Group>
      </Ribbon>

      <Workspace>
        <ViewRail>
          <RailItem $on><Art b={[12, 151, 19, 19]}><R x={12.500} y={152.500} w={18} h={17} stroke="#fff" /><R x={15} y={159} w={3} h={10} f="#fff" /><R x={20} y={163} w={3} h={6} f="#fff" /><R x={25} y={157} w={3} h={12} f="#fff" /></Art></RailItem>
          <RailItem><Art b={[12, 193, 19, 20]}><R x={12.500} y={193.500} w={18} h={19} stroke="#888" /><R x={12} y={193} w={19} h={5} f="#888" /><path d="M18.500 198v15M24.500 198v15M12 202.500h19M12 207.500h19" stroke="#888" /></Art></RailItem>
          <RailItem><Art b={[12, 235, 19, 20]}><path d="M19.500 245.500l4-5M19.500 245.500l4 5" stroke="#888" />{[[12, 241], [23, 236], [23, 246]].map(([x, y]) => <g key={x + y}><R x={x + 0.5} y={y + 0.5} w={7} h={7} f="#212121" stroke="#888" /><R x={x} y={y} w={8} h={3} f="#888" /></g>)}</Art></RailItem>
        </ViewRail>

        <ReportArea>
          <CanvasWrap><Canvas><PieVisual /></Canvas></CanvasWrap>
          <PageBar>
            <PageArrows><Art b={[42, 671, 35, 35]}><path d="M52 685v8l-4.500-4zM65 685v8l4.500-4z" fill="#c4c4c4" /></Art></PageArrows>
            <PageTab>Page 1</PageTab>
            <AddPage><Art b={[0, 0, 11, 12]}><path d="M5.500 0v11M0 5.500h11" stroke="#7a6f45" strokeWidth="3" /></Art></AddPage>
          </PageBar>
        </ReportArea>

        <Pane>
          <PaneHead>Visualizations<Chevron /></PaneHead>
          <Gallery>{gallery.map((g, i) => <GalleryCell key={i} $on={i === 13}><Art b={[0, 0, 20, 20]}>{g}</Art></GalleryCell>)}</Gallery>
          <WellTabs>
            <WellTab $on><Art b={[1024, 319, 22, 21]}><g stroke="#fff" strokeDasharray="2 1"><R x={1025.500} y={322.500} w={19} h={6} /><R x={1025.500} y={331.500} w={19} h={7} /></g><path d="M1025 319.500h16M1025 325.500h20" stroke="#fff" /></Art></WellTab>
            <WellTab><Art b={[1066, 318, 19, 22]} stroke="#eee" strokeWidth="1.200"><R x={1066.500} y={319.500} w={14} h={4} rx="1" /><path d="M1081 321.500h3v5.500h-9.500v4" /><R x={1072.500} y={330.500} w={4} h={8} rx="1" /></Art></WellTab>
            <WellTab><Art b={[1104, 318, 22, 22]} stroke="#eee" strokeWidth="1.200"><circle cx="1113.500" cy="328" r="8.500" /><path d="M1120 334l5 5" strokeWidth="1.800" /><path d="M1106 328l4-4 3 3 7-6M1109.500 328v6M1112.500 330v6M1115.500 328v7M1118.500 326v6" /></Art></WellTab>
          </WellTabs>
          <Wells>
            <WellList>
              <WellTitle>Legend</WellTitle><DropZone>Drag data fields here</DropZone>
              <WellTitle $h={32} $pt={5}>Details</WellTitle><DropZone>Drag data fields here</DropZone>
              <WellTitle $h={32} $pt={5}>Values</WellTitle>
              <ValueZone>
                <Chip><ChipName>DEPARTURE_DELAY</ChipName><ChipTools /></Chip>
                <Chip><ChipName>ARRIVAL_DELAY</ChipName><ChipTools /></Chip>
              </ValueZone>
              <WellTitle $h={32} $pt={5}>Tooltips</WellTitle><DropZone>Drag data fields here</DropZone>
            </WellList>
            <ScrollThumb />
          </Wells>
          <FiltersHead>Filters</FiltersHead>
          <WellTitle $h={36} $pt={5}>Visual level filters</WellTitle>
          <FilterZone><Chip><ChipName $l={3}>ARRIVAL_DELAY(All)</ChipName></Chip></FilterZone>
        </Pane>

        <Pane>
          <PaneHead>Fields<Chevron /></PaneHead>
          <SearchArea><SearchBox><Art b={[0, 0, 16, 16]}><circle cx="10" cy="5.500" r="5" stroke="#aaa" strokeWidth="1.200" /><path d="M6.500 9L.500 15.500" stroke="#aaa" strokeWidth="1.400" /></Art>Search</SearchBox></SearchArea>
          <TableRow>
            <Art b={[0, 0, 28, 14]}><path d="M6 4v6H0z" fill="#bbb" /><R x={15} y={1} w={13} h={12} f="#ddd" /><path d="M15 5.500h13M15 9.500h13M19.500 4v9M23.500 4v9" stroke="#444" /></Art>
            <TableName>Sheet1</TableName>
          </TableRow>
          {fields.map(([name, sum, on]) => (
            <FieldRow key={name} $hot={name === "ARRIVAL_DELAY"}>
              <CheckBox $on={on}>{on ? <Art b={[0, 0, 10, 8]}><path d="M1 4l2.800 3L9 1" stroke="#333" strokeWidth="1.500" /></Art> : null}</CheckBox>
              <Sigma>{sum ? <Art b={[0, 0, 9, 10]}><path d="M8.500 2.500V.500h-8l4.500 4.500-4.500 4.500h8v-2" stroke="#aaa" strokeWidth="1.100" /></Art> : null}</Sigma>
              {name}
            </FieldRow>
          ))}
        </Pane>
      </Workspace>

      <StatusBar><span>PAGE 1 OF 1</span><span>UPDATE AVAILABLE (CLICK TO DOWNLOAD)</span></StatusBar>
      <Taskbar>
        <StartButton><Art b={[16, 740, 16, 16]}><path fill="#fff" d="M16 742.300l6.500-.900v6.200H16zM23.500 741.200l8.500-1.200v7.600h-8.500zM16 748.500h6.500v6.200l-6.500-.900zM23.500 748.500h8.500v7.500l-8.500-1.200z" /></Art></StartButton>
        <TaskSearch>
          <Art b={[57, 737, 22, 22]}><circle cx="68" cy="748" r="9.200" stroke="#fff" strokeWidth="2.600" /></Art>
          <SearchHint>Type here to search</SearchHint>
          <Art b={[366, 739, 12, 18]} stroke="#aaa"><R x={369.500} y={740.500} w={5} h={9} /><R x={370} y={745} w={4} h={5} f="#aaa" /><path d="M366.500 747v2.500q0 3 3 3h5q3 0 3-3V747M372 753v2.500M368.500 755.500h6" /></Art>
        </TaskSearch>
        {apps.map((a, i) => <AppButton key={i} $w={a.w} $ml={a.ml} $open={a.open} $active={a.active}>{a.art}</AppButton>)}
        <Tray>
          <Art b={[1155, 728, 91, 40]} stroke="#fff">
            <path d="M1159 751.500l5.500-5.500 5.500 5.500" strokeWidth="1.300" />
            <path d="M1187 743.500h8v9h-9.500M1196.500 746.500v3M1182.500 742v3M1185.500 742v3M1181.500 745.500h5v2l-2.500 1.500zM1184 749v3.500h2" /><R x={1187.500} y={746} w={2.500} h={4} f="#fff" />
            <g stroke="#999"><path d="M1208.500 755A12 12 0 0 1 1220 743.500M1211.500 755A9 9 0 0 1 1220 746.500" /><path d="M1214.500 755A6 6 0 0 1 1220 749.500M1217 755A3.500 3.500 0 0 1 1220 752" stroke="#fff" /></g><circle cx="1218.500" cy="753.500" r="1" fill="#fff" />
            <path d="M1229.500 745.500h2.500l3.500-3v11.500l-3.500-3h-2.500zM1237.500 745.500q2 2.700 0 5.500M1240 743.500q3.500 4.700 0 9.500M1242.500 741.500q5 6.700 0 13.500" />
          </Art>
        </Tray>
        <Clock>1:12 AM<br />9/19/2017</Clock>
        <ActionCentre><Art b={[1325, 740, 16, 16]}><path d="M1325.500 740.500h15v11.500h-5l-2.500 2.500-2.500-2.500h-5z" stroke="#fff" strokeWidth="1.200" /></Art></ActionCentre>
      </Taskbar>
    </Desktop>
  );
}
